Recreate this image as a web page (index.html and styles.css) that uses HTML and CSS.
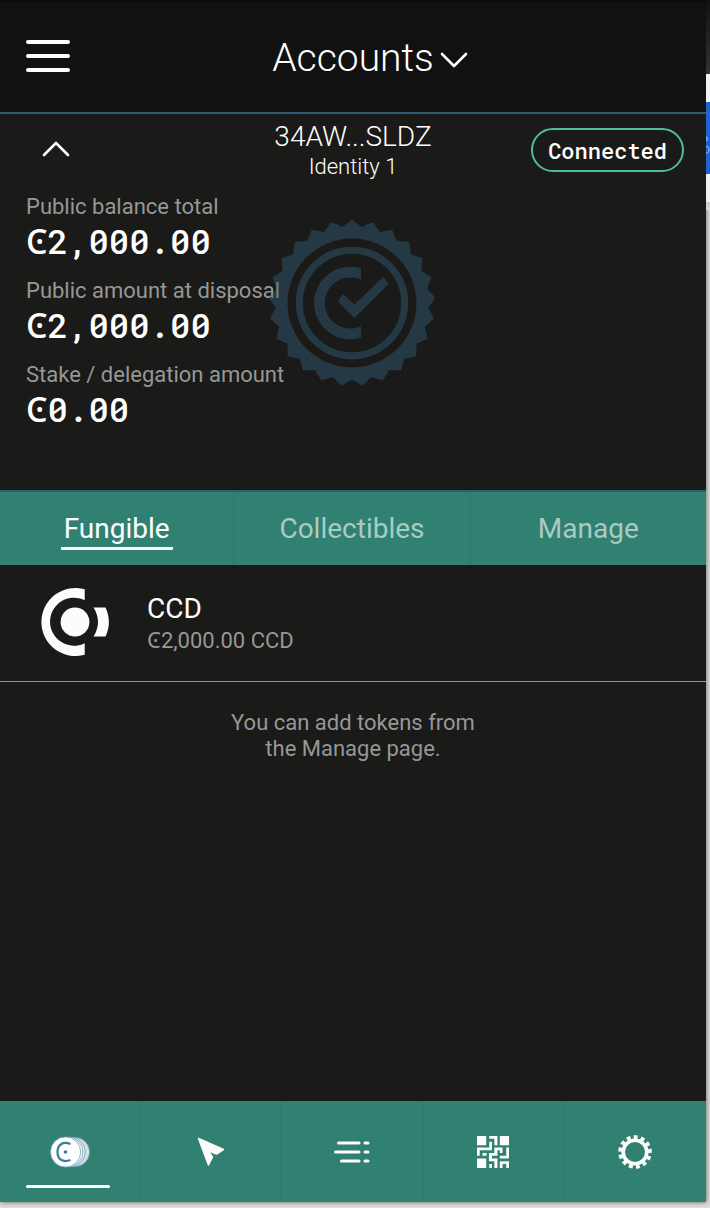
FILE: index.html
```html
<!DOCTYPE html>
<html lang="en">
<head>
<meta charset="utf-8">
<title>Accounts</title>
<link rel="stylesheet" href="styles.css">
</head>
<body>
<div class="backdrop" aria-hidden="true">
  <svg class="backdrop-mark" viewBox="0 0 4 20"><path d="M0 1h1v4M0 11c4-2 4 7 0 6" fill="none" stroke="#a9c6f3"/></svg>
</div>
<div class="wallet">
  <header class="topbar">
    <button class="icon-button menu" type="button" aria-label="Menu">
      <svg width="44" height="34" viewBox="0 0 44 34"><path d="M2 3h40M2 17h40M2 31h40" fill="none" stroke="#fff" stroke-width="4" stroke-linecap="round"/></svg>
    </button>
    <button class="title" type="button">
      <span>Accounts</span>
      <svg width="28" height="16" viewBox="0 0 28 16"><path d="M2 2l12 12L26 2" fill="none" stroke="#fff" stroke-width="2.6" stroke-linecap="round" stroke-linejoin="round"/></svg>
    </button>
  </header>

  <main class="content">
    <section class="account">
      <div class="account-head">
        <button class="icon-button collapse" type="button" aria-label="Collapse">
          <svg width="28" height="16" viewBox="0 0 28 16"><path d="M2 14L14 2l12 12" fill="none" stroke="#fff" stroke-width="2.6" stroke-linecap="round" stroke-linejoin="round"/></svg>
        </button>
        <div class="identity">
          <div class="address">34AW...SLDZ</div>
          <div class="identity-name">Identity 1</div>
        </div>
        <button class="status" type="button">Connected</button>
      </div>
      <dl class="balances">
        <div><dt>Public balance total</dt><dd><span class="currency">Ͼ</span>2,000.00</dd></div>
        <div><dt>Public amount at disposal</dt><dd><span class="currency">Ͼ</span>2,000.00</dd></div>
        <div><dt>Stake / delegation amount</dt><dd><span class="currency">Ͼ</span>0.00</dd></div>
      </dl>
      <svg class="seal" viewBox="-84 -84 168 168" aria-hidden="true">
        <path fill="#326482" fill-rule="evenodd" d="M0-83.5L9.6-75.9 20.8-80.9 28.2-71.1 40.2-73.2 45-61.9 57.2-60.9 58.9-48.8 70.5-44.7 69.2-32.6 79.4-25.8 75.1-14.3 83.3-5.2 76.3 4.8 82 15.6 72.8 23.6 75.6 35.6 64.6 41 64.3 53.2 52.4 55.8 49.1 67.6 36.9 67 30.7 77.6 19 74.1 10.5 82.8 0 76.5-10.5 82.8-19 74.1-30.7 77.6-36.9 67-49.1 67.6-52.4 55.8-64.3 53.2-64.6 41-75.6 35.6-72.8 23.6-82 15.6-76.3 4.8-83.3-5.2-75.1-14.3-79.4-25.8-69.2-32.6-70.5-44.7-58.9-48.8-57.2-60.9-45-61.9-40.2-73.2-28.2-71.1-20.8-80.9-9.6-75.9ZM-64.5 0A64.5 64.5 0 0 0 64.5 0A64.5 64.5 0 0 0-64.5 0Z"/>
        <circle r="52.7" fill="none" stroke="#326482" stroke-width="7"/>
        <path fill="#326482" d="M9-34.7A36.3 36.3 0 1 0 9 34.7V23.3A25.6 25.6 0 1 1 9-23.3Z"/>
        <path fill="#326482" stroke="#326482" stroke-width="2" stroke-linejoin="round" d="M-8.7-7.3L2.3 3 31.3-24.7 35.3-19.3 2.3 13.7-13-1.7Z"/>
      </svg>
    </section>

    <nav class="tabs" aria-label="Tokens">
      <a class="tab active" href="#fungible"><span>Fungible</span></a>
      <a class="tab" href="#collectibles"><span>Collectibles</span></a>
      <a class="tab" href="#manage"><span>Manage</span></a>
    </nav>

    <a class="token" href="#ccd">
      <svg width="68" height="68" viewBox="0 0 68 68" fill="#fcfcfa" aria-hidden="true">
        <path d="M43.7 1.3A34 34 0 1 0 43.7 66.7V55.2A24 24 0 1 1 43.7 12.200Z"/>
        <circle cx="34" cy="34" r="14.4"/>
        <path d="M52.500 19.500H64.500C69 29 69 39 64.500 48.500H52.500C58.500 39 58.500 29 52.500 19.500Z"/>
      </svg>
      <span class="token-text">
        <span class="token-name">CCD</span>
        <span class="token-amount"><span class="currency">Ͼ</span>2,000.00 CCD</span>
      </span>
    </a>
    <p class="hint">You can add tokens from the Manage page.</p>
  </main>

  <nav class="bottombar" aria-label="Main">
    <a class="nav-item active" href="#tokens" aria-label="Tokens">
      <svg width="40" height="32" viewBox="0 0 40 32" stroke="#6c9fbd" stroke-width="0.8">
        <circle cx="25" cy="16" r="14.6" fill="#d9dde0"/><circle cx="20.5" cy="16" r="14.8" fill="#e9ecee"/><circle cx="18" cy="16" r="15" fill="#f6f7f7"/><circle cx="15.6" cy="16" r="15.1" fill="#fff"/>
        <path d="M20.500 8C12.500 5 7.500 9 7.500 16s5 11 13 8" fill="none" stroke="#397ca6" stroke-width="2.200"/><circle cx="15.500" cy="16" r="1.800" fill="#397ca6" stroke="none"/>
      </svg>
    </a>
    <a class="nav-item" href="#send" aria-label="Send">
      <svg width="28" height="30" viewBox="0 0 28 30"><path d="M1.500 1.500L26.500 12.500 19.500 17 11 13.500 15.500 20 11.500 28Z" fill="#fcfcfa" stroke="#fcfcfa" stroke-width="1.500" stroke-linejoin="round"/></svg>
    </a>
    <a class="nav-item" href="#activity" aria-label="Activity">
      <svg width="36" height="24" viewBox="0 0 36 24"><path d="M4.500 3H25M31 3h3M1.500 12H25M31 12h3M7.500 21H25M31 21h3" fill="none" stroke="#fcfcfa" stroke-width="3" stroke-linecap="round"/></svg>
    </a>
    <a class="nav-item" href="#scan" aria-label="Scan">
      <svg width="32" height="32" viewBox="0 0 94 94" fill="#fcfcfa"><path d="M0 0h27v27H0zM67 0h27v27H67zM0 66h27v28H0zM36 0h24v27h-9V8H36zM36 17h8v25H8v16H0V34h36zM16 50h12v8H16zM51 34h24v16h-8v-8h-7v16H44v8h16v28h-9V74H35V50h16zM86 34h8v32H67v-8h19zM36 82h8v12h-8zM67 74h27v20h-8V82H75v12h-8z"/></svg>
    </a>
    <a class="nav-item" href="#settings" aria-label="Settings">
      <svg width="36" height="36" viewBox="-18 -18 36 36" fill="none" stroke="#fcfcfa"><circle r="11.800" stroke-width="3.600"/><circle r="14.700" stroke-width="4.200" pathLength="26" stroke-dasharray="1.100 .900" transform="rotate(-95)"/></svg>
    </a>
  </nav>
</div>
</body>
</html>
```
FILE: styles.css
```css
* { box-sizing: border-box; }

body {
  margin: 0;
  min-height: 100vh;
  display: grid;
  padding: 0 4px 6px 0;
  background: #dededf;
  font-family: Roboto, "DejaVu Sans", sans-serif;
  font-size: 22px;
  line-height: 28px;
  color: #fff;
}

button { border: 0; padding: 0; background: none; color: inherit; font: inherit; cursor: pointer; }
a { color: inherit; text-decoration: none; }
svg { display: block; }

.backdrop {
  position: absolute;
  top: 0;
  right: 0;
  width: 4px;
  height: 210px;
  background: linear-gradient(#111 0, #333 74px, #f2f2f2 74px, #f2f2f2 102px, #1e63d0 102px, #1e63d0 174px, #f2f2f2 174px, #f2f2f2 202px, #c8c8ca 202px, #dededf);
}
.backdrop-mark { width: 4px; height: 20px; margin-top: 136px; }

.wallet {
  display: flex;
  flex-direction: column;
  background: #1a1a18;
  box-shadow: 0 0 5px #555;
}

.topbar {
  display: grid;
  grid-template-columns: 1fr auto 1fr;
  align-items: center;
  height: 114px;
  padding: 0 26px;
  background: #111;
  border-top: 2px solid #0b0b0b;
  border-bottom: 2px solid #315b73;
}
.icon-button { justify-self: start; }
.menu { margin-bottom: 3px; }
.title {
  display: flex;
  align-items: center;
  gap: 6px;
  padding: 2px 0 0 34px;
  font-size: 39px;
  font-weight: 300;
  line-height: 48px;
}
.title svg { margin-top: 4px; }

.content { flex: 1; }

.account {
  position: relative;
  padding: 5px 22px 62px;
  border-bottom: 2px solid #315b73;
}
.account-head {
  display: grid;
  grid-template-columns: 1fr auto 1fr;
  align-items: center;
  margin-bottom: 11px;
  text-align: center;
  font-weight: 300;
}
.identity { padding-top: 2px; }
.collapse { margin: 0 0 3px 20px; }
.address { font-size: 28px; line-height: 32px; }
.status {
  justify-self: end;
  padding: 1px 15px 0;
  border: 2px solid #4bbf9b;
  border-radius: 22px;
  font-family: "Roboto Mono", "DejaVu Sans Mono", monospace;
  font-size: 22px;
  font-weight: 500;
  line-height: 39px;
}

.balances { display: grid; gap: 16px; margin: 0; padding-left: 4px; }
.balances dt { line-height: 30px; color: #979797; }
.balances dd {
  margin: 0;
  font-family: "Roboto Mono", "DejaVu Sans Mono", monospace;
  font-size: 34px;
  font-weight: 500;
  line-height: 38px;
}
.currency { font-family: "Noto Sans", Inter, sans-serif; }
.seal {
  position: absolute;
  top: 105px;
  left: calc(50% - 85px);
  width: 168px;
  height: 168px;
  opacity: 0.42;
}

.tabs {
  display: grid;
  grid-template-columns: repeat(3, 1fr);
  background: #308171;
  color: #a9cbc2;
  font-size: 28px;
  line-height: 36px;
}
.tab { padding: 19px 0 15px; text-align: center; }
.tab:not(:last-child), .nav-item:not(:last-child) { border-right: 2px solid #32796c; }
.tab span { display: inline-block; padding: 0 3px; border-bottom: 3px solid transparent; border-radius: 1px; }
.tab.active { color: #fff; }
.tab.active span { border-color: #fff; }

.token {
  display: flex;
  align-items: center;
  gap: 38px;
  padding: 23px 41px 25px;
  border-bottom: 1px solid #949490;
}
.token-text { padding-top: 4px; }
.token-name { display: block; font-size: 28px; line-height: 32px; }
.token-amount { display: block; color: #979797; }

.hint {
  max-width: 270px;
  margin: 28px auto;
  line-height: 26px;
  text-align: center;
  color: #979797;
}

.bottombar {
  display: grid;
  grid-template-columns: repeat(5, 1fr);
  height: 101px;
  background: #308171;
}
.nav-item { display: grid; place-items: center; position: relative; }
.nav-item.active::after {
  content: "";
  position: absolute;
  left: 26px;
  right: 29px;
  bottom: 14px;
  height: 3px;
  border-radius: 2px;
  background: #fff;
}
```
